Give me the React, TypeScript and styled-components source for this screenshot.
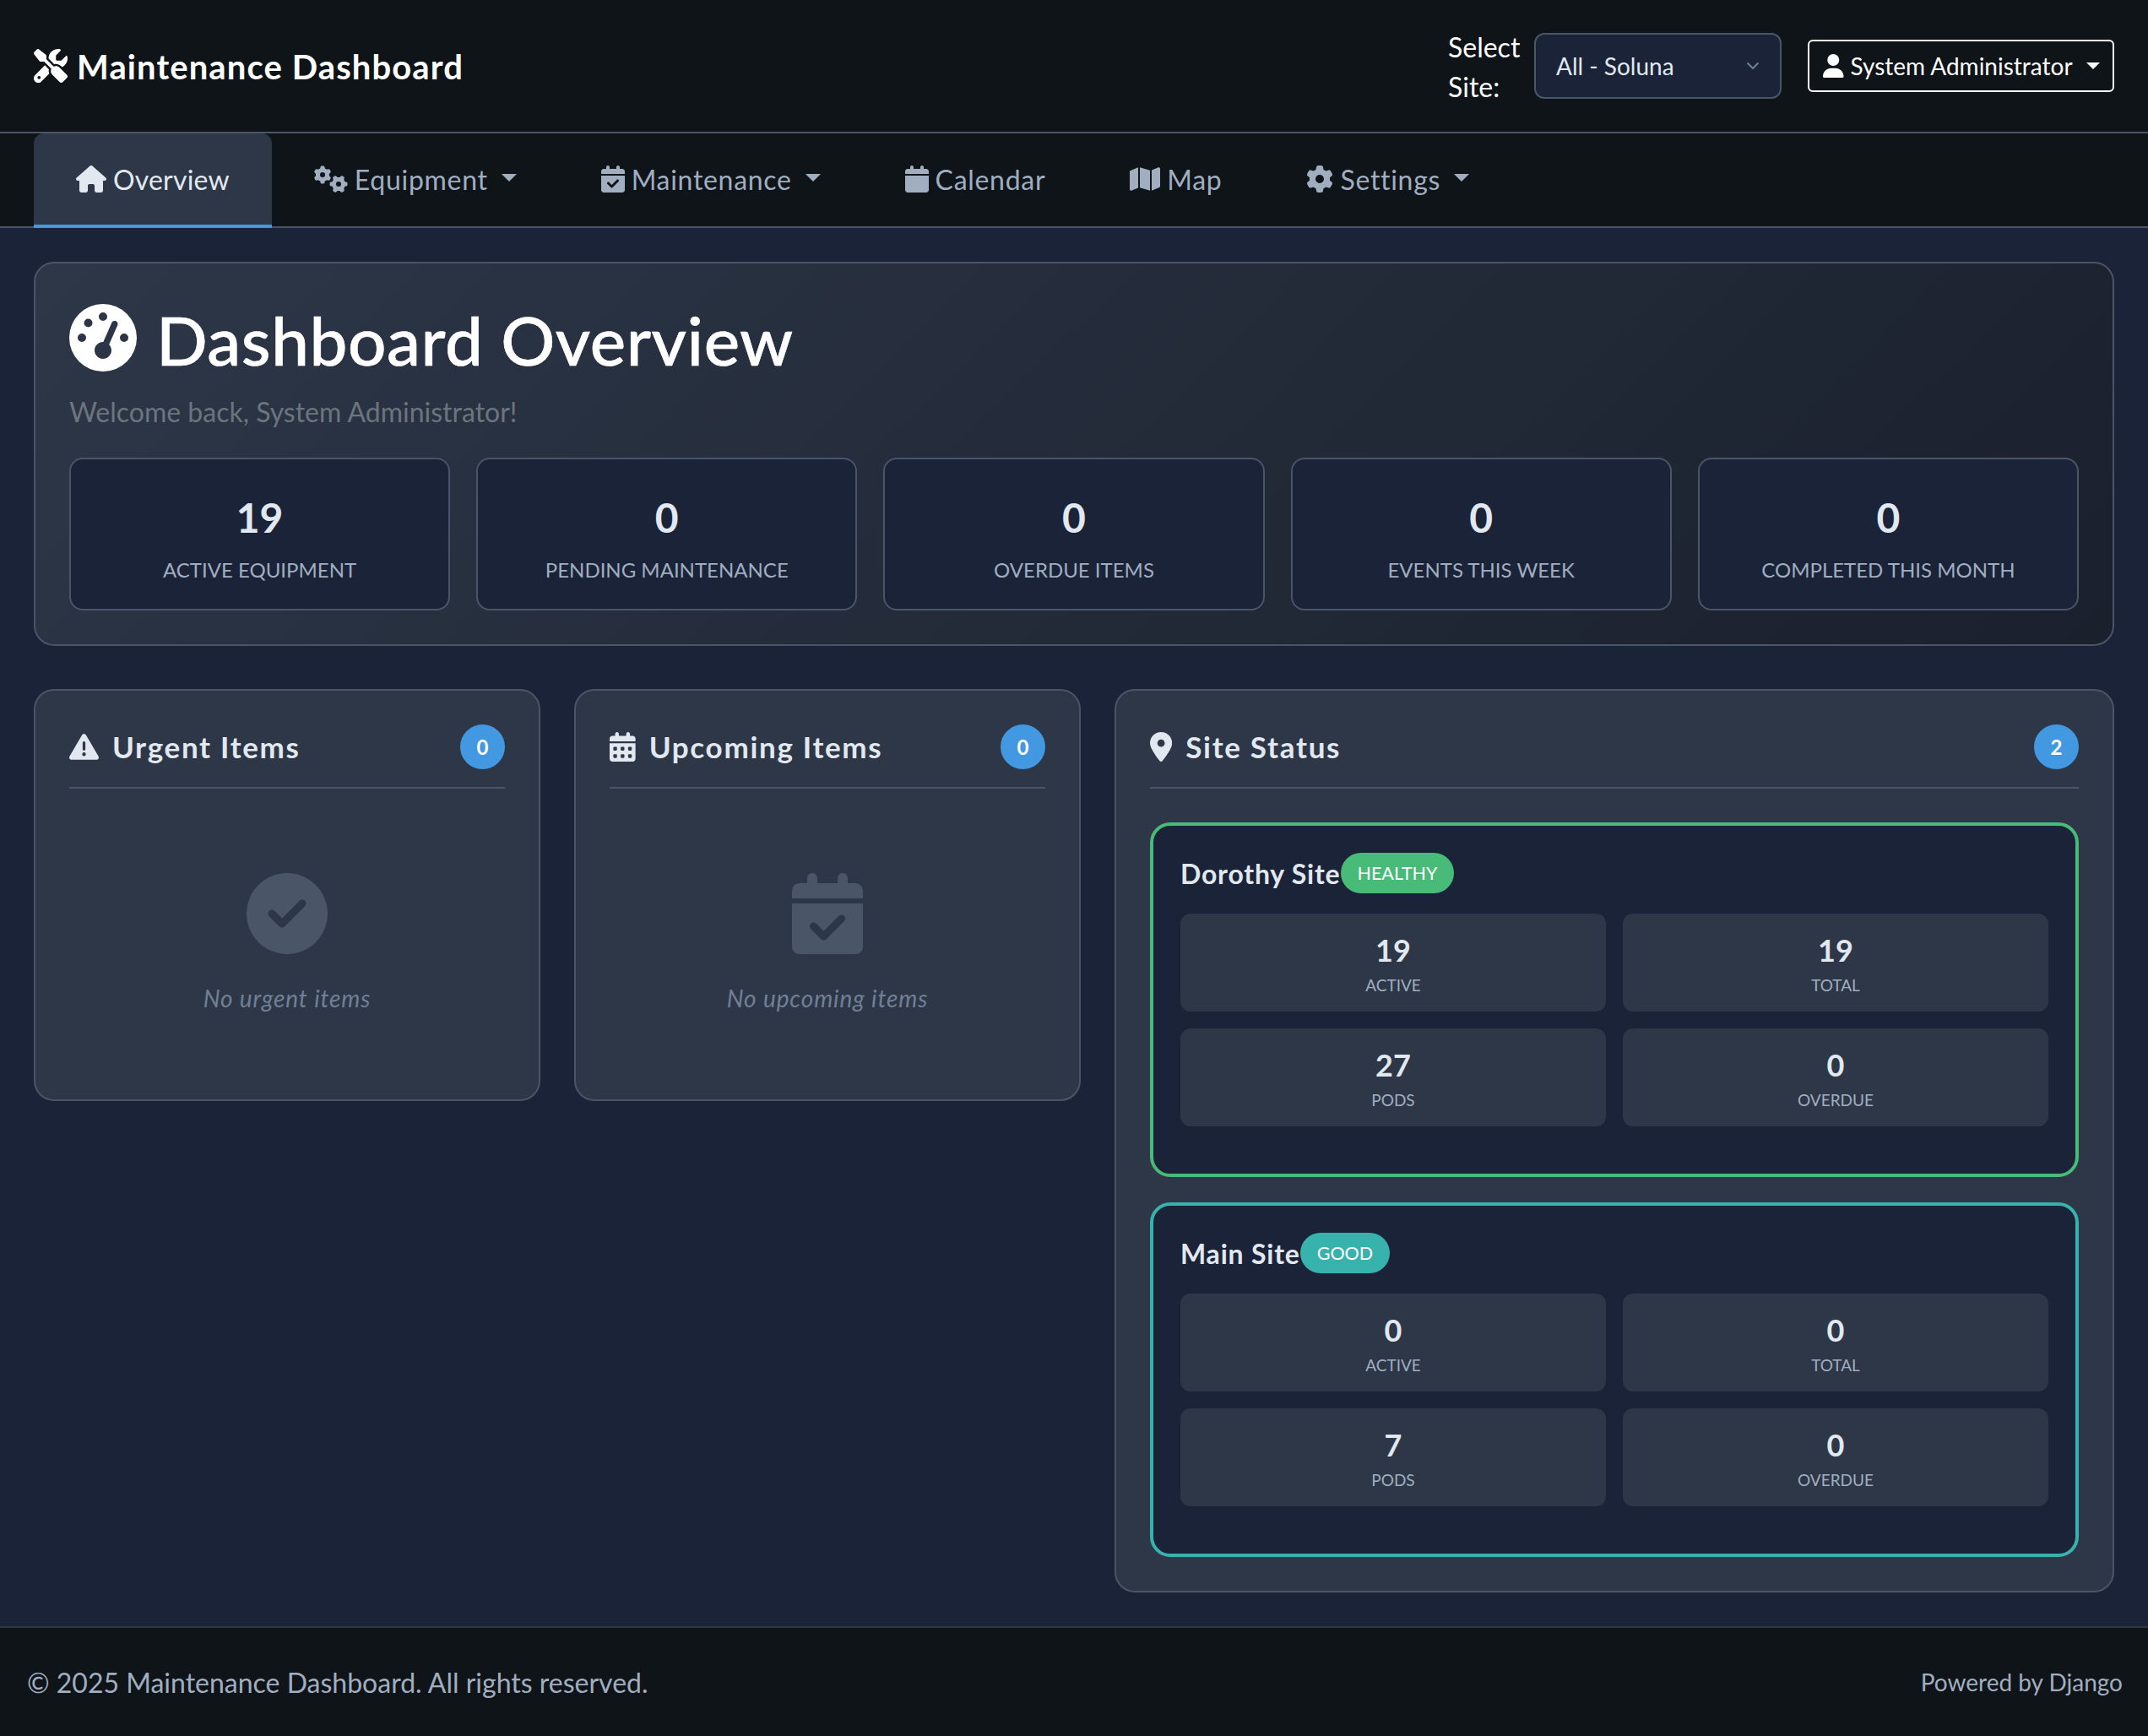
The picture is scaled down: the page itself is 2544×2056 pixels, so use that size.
import React from "react";
import styled, { createGlobalStyle } from "styled-components";
import {
  FaScrewdriverWrench, FaHouse, FaGears, FaCalendarCheck, FaCalendar, FaMap, FaGear, FaUser,
  FaGaugeHigh, FaTriangleExclamation, FaCalendarDays, FaLocationDot, FaCircleCheck,
} from "react-icons/fa6";

const Global = createGlobalStyle`
  html, body { margin: 0; padding: 0; background: #1a2338; }
  body { font-family: "Lato", "Noto Sans", sans-serif; color: #e2e8f0; }
  * { box-sizing: border-box; }
`;

const Page = styled.div`
  min-height: 100vh;
  display: flex;
  flex-direction: column;
`;

/* Font Awesome glyphs sit on a 512-unit em: width follows the glyph's own advance. */
const IconBox = styled.span<{ $em: number; $units: number }>`
  flex: none;
  display: inline-flex;
  height: ${(p) => p.$em}px;
  width: ${(p) => (p.$em * p.$units) / 512}px;
  svg { width: 100%; height: 100%; }
`;

const Header = styled.header`
  height: 158px;
  background: #0f1419;
  border-bottom: 2px solid #4a5568;
  display: flex;
  align-items: center;
  justify-content: space-between;
  padding: 0 40px;
`;

const Brand = styled.div`
  display: flex;
  align-items: center;
  gap: 11px;
  font-size: 40px;
  font-weight: 700;
  letter-spacing: 1.1px;
  color: #fff;
`;

const BrandText = styled.span`
  padding-top: 2px;
`;

const HeaderRight = styled.div`
  display: flex;
  align-items: center;
`;

const SiteLabel = styled.label`
  width: 102px;
  padding-top: 2px;
  font-size: 32px;
  line-height: 47px;
  color: #fff;
`;

const SiteSelect = styled.div`
  width: 293px;
  height: 78px;
  margin-right: 31px;
  padding: 0 24px;
  background: #1a2338;
  border: 2px solid #4a5568;
  border-radius: 12px;
  display: flex;
  align-items: center;
  justify-content: space-between;
  font-size: 28px;
  color: #e2e8f0;
`;

const UserButton = styled.button`
  height: 62px;
  width: 363px;
  background: transparent;
  border: 2px solid #fff;
  border-radius: 6px;
  color: #fff;
  font: 28px "Lato", "Noto Sans", sans-serif;
  white-space: nowrap;
  display: flex;
  align-items: center;
  gap: 8px;
  padding: 0 16px;
  &::after {
    content: "";
    margin-left: 8px;
    border-top: 8px solid #fff;
    border-left: 8px solid transparent;
    border-right: 8px solid transparent;
  }
`;

const Nav = styled.nav`
  height: 112px;
  background: #0f1419;
  border-bottom: 2px solid #4a5568;
  display: flex;
  padding: 0 40px;
`;

const NavItem = styled.a<{ $active?: boolean; $caret?: boolean }>`
  height: 112px;
  padding: 0 50px;
  display: flex;
  align-items: center;
  gap: 8px;
  font-size: 32px;
  letter-spacing: ${(p) => (p.$active ? "0.2px" : "0.7px")};
  color: ${(p) => (p.$active ? "#e2e8f0" : "#a0aec0")};
  background: ${(p) => (p.$active ? "#2d3748" : "transparent")};
  border-radius: ${(p) => (p.$active ? "12px 12px 0 0" : "0")};
  border-bottom: 4px solid ${(p) => (p.$active ? "#4299e1" : "transparent")};
  ${(p) =>
    p.$caret
      ? `&::after {
    content: "";
    margin-left: 8px;
    margin-bottom: 4px;
    border-top: 9px solid currentColor;
    border-left: 9px solid transparent;
    border-right: 9px solid transparent;
  }`
      : ""}
`;

const Main = styled.main`
  flex: 1;
  padding: 40px;
`;

const Hero = styled.section`
  height: 455px;
  margin-bottom: 51px;
  padding: 40px;
  border: 2px solid #4a5568;
  border-radius: 24px;
  background: linear-gradient(135deg, #2d3748 0%, #1a202c 100%);
`;

const HeroTitle = styled.h1`
  margin: 0;
  display: flex;
  align-items: center;
  gap: 23px;
  height: 96px;
  font-size: 80px;
  line-height: 96px;
  font-weight: 500;
  letter-spacing: 0.55px;
  color: #fff;
`;

const HeroText = styled.span`
  padding-top: 3px;
  -webkit-text-stroke: 0.6px #fff;
`;

const HeroSub = styled.p`
  margin: 16px 0 0;
  font-size: 32px;
  line-height: 48px;
  color: #6c757d;
`;

const StatRow = styled.div`
  margin-top: 30px;
  display: grid;
  grid-template-columns: repeat(5, 1fr);
  gap: 31px;
`;

const StatCard = styled.div`
  height: 181px;
  background: #1a2338;
  border: 2px solid #4a5568;
  border-radius: 16px;
  padding-top: 8px;
  display: flex;
  flex-direction: column;
  align-items: center;
  justify-content: center;
`;

const StatValue = styled.div`
  font-size: 48px;
  font-weight: 700;
  line-height: 58px;
  color: #e2e8f0;
`;

const StatLabel = styled.div`
  margin-top: 18px;
  font-size: 24px;
  line-height: 30px;
  text-transform: uppercase;
  color: #a0aec0;
`;

const Columns = styled.div`
  display: grid;
  grid-template-columns: 600px 600px 1184px;
  column-gap: 40px;
  align-items: start;
`;

const Card = styled.section`
  padding: 40px;
  background: #2d3748;
  border: 2px solid #4a5568;
  border-radius: 24px;
`;

const CardHeader = styled.div`
  height: 76px;
  border-bottom: 2px solid #4a5568;
  padding-bottom: 22px;
  display: flex;
  align-items: center;
  justify-content: space-between;
`;

const CardTitle = styled.h2`
  margin: 0;
  display: flex;
  align-items: center;
  gap: 16px;
  font-size: 35px;
  font-weight: 700;
  letter-spacing: 1.7px;
  color: #e2e8f0;
`;

const CountBadge = styled.span`
  width: 53px;
  height: 53px;
  margin-top: 1px;
  border-radius: 50%;
  background: #4299e1;
  color: #fff;
  font-size: 24px;
  font-weight: 700;
  display: flex;
  align-items: center;
  justify-content: center;
`;

const Empty = styled.div`
  height: 328px;
  padding-top: 100px;
  display: flex;
  flex-direction: column;
  align-items: center;
  color: #4a5568;
`;

const EmptyText = styled.p`
  margin: 32px 0 0;
  font-size: 28px;
  line-height: 40px;
  font-style: italic;
  letter-spacing: 0.9px;
  color: #718096;
`;

const SiteList = styled.div`
  margin-top: 40px;
  display: flex;
  flex-direction: column;
  gap: 30px;
`;

const SitePanel = styled.article<{ $color: string }>`
  height: 420px;
  padding: 32px 32px 0;
  background: #1a2338;
  border: 4px solid ${(p) => p.$color};
  border-radius: 24px;
`;

const SiteHead = styled.div`
  height: 48px;
  display: flex;
  align-items: center;
  margin-bottom: 24px;
`;

const SiteName = styled.h3`
  margin: 0;
  font-size: 32px;
  font-weight: 700;
  letter-spacing: 0.8px;
  color: #e2e8f0;
`;

const Pill = styled.span<{ $color: string }>`
  height: 48px;
  padding: 0 20px;
  border-radius: 24px;
  background: ${(p) => p.$color};
  color: #fff;
  font-size: 21.5px;
  display: flex;
  align-items: center;
`;

const MetricGrid = styled.div`
  display: grid;
  grid-template-columns: 1fr 1fr;
  gap: 20px;
`;

const Metric = styled.div`
  height: 116px;
  background: #2d3748;
  border-radius: 12px;
  padding-top: 2px;
  display: flex;
  flex-direction: column;
  align-items: center;
  justify-content: center;
`;

const MetricValue = styled.div`
  font-size: 36px;
  font-weight: 700;
  line-height: 44px;
  color: #e2e8f0;
`;

const MetricLabel = styled.div`
  margin-top: 7px;
  font-size: 19px;
  line-height: 26px;
  text-transform: uppercase;
  color: #a0aec0;
`;

const Footer = styled.footer`
  height: 130px;
  background: #0f1419;
  border-top: 2px solid #2d3748;
  padding: 0 30px 0 32px;
  display: flex;
  align-items: center;
  justify-content: space-between;
  color: #a0aec0;
`;

const FooterLeft = styled.span`
  font-size: 32px;
`;

const FooterRight = styled.span`
  font-size: 28px;
`;

const Chevron = () => (
  <svg width="16" height="16" viewBox="0 0 16 16" fill="none" stroke="#718096" strokeWidth="2" strokeLinecap="round" strokeLinejoin="round">
    <path d="M2 5l6 6 6-6" />
  </svg>
);

const stats: [string, string][] = [
  ["19", "Active Equipment"],
  ["0", "Pending Maintenance"],
  ["0", "Overdue Items"],
  ["0", "Events This Week"],
  ["0", "Completed This Month"],
];

const sites = [
  { name: "Dorothy Site", status: "HEALTHY", color: "#48bb78", m: [["19", "Active"], ["19", "Total"], ["27", "Pods"], ["0", "Overdue"]] },
  { name: "Main Site", status: "GOOD", color: "#38b2ac", m: [["0", "Active"], ["0", "Total"], ["7", "Pods"], ["0", "Overdue"]] },
];

export default function App() {
  return (
    <Page>
      <Global />
      <Header>
        <Brand>
          <IconBox $em={40} $units={512}><FaScrewdriverWrench /></IconBox>
          <BrandText>Maintenance Dashboard</BrandText>
        </Brand>
        <HeaderRight>
          <SiteLabel>Select Site:</SiteLabel>
          <SiteSelect>All - Soluna<Chevron /></SiteSelect>
          <UserButton><IconBox $em={28} $units={448}><FaUser /></IconBox>System Administrator</UserButton>
        </HeaderRight>
      </Header>
      <Nav>
        <NavItem $active><IconBox $em={32} $units={576}><FaHouse /></IconBox>Overview</NavItem>
        <NavItem $caret><IconBox $em={32} $units={640}><FaGears /></IconBox>Equipment</NavItem>
        <NavItem $caret><IconBox $em={32} $units={448}><FaCalendarCheck /></IconBox>Maintenance</NavItem>
        <NavItem><IconBox $em={32} $units={448}><FaCalendar /></IconBox>Calendar</NavItem>
        <NavItem><IconBox $em={32} $units={576}><FaMap /></IconBox>Map</NavItem>
        <NavItem $caret><IconBox $em={32} $units={512}><FaGear /></IconBox>Settings</NavItem>
      </Nav>
      <Main>
        <Hero>
          <HeroTitle>
            <IconBox $em={80} $units={512}><FaGaugeHigh /></IconBox>
            <HeroText>Dashboard Overview</HeroText>
          </HeroTitle>
          <HeroSub>Welcome back, System Administrator!</HeroSub>
          <StatRow>
            {stats.map(([v, l]) => (
              <StatCard key={l}><StatValue>{v}</StatValue><StatLabel>{l}</StatLabel></StatCard>
            ))}
          </StatRow>
        </Hero>
        <Columns>
          <Card>
            <CardHeader>
              <CardTitle><IconBox $em={35} $units={512}><FaTriangleExclamation /></IconBox>Urgent Items</CardTitle>
              <CountBadge>0</CountBadge>
            </CardHeader>
            <Empty><IconBox $em={96} $units={512}><FaCircleCheck /></IconBox><EmptyText>No urgent items</EmptyText></Empty>
          </Card>
          <Card>
            <CardHeader>
              <CardTitle><IconBox $em={35} $units={448}><FaCalendarDays /></IconBox>Upcoming Items</CardTitle>
              <CountBadge>0</CountBadge>
            </CardHeader>
            <Empty><IconBox $em={96} $units={448}><FaCalendarCheck /></IconBox><EmptyText>No upcoming items</EmptyText></Empty>
          </Card>
          <Card>
            <CardHeader>
              <CardTitle><IconBox $em={35} $units={384}><FaLocationDot /></IconBox>Site Status</CardTitle>
              <CountBadge>2</CountBadge>
            </CardHeader>
            <SiteList>
              {sites.map((s) => (
                <SitePanel key={s.name} $color={s.color}>
                  <SiteHead><SiteName>{s.name}</SiteName><Pill $color={s.color}>{s.status}</Pill></SiteHead>
                  <MetricGrid>
                    {s.m.map(([v, l]) => (
                      <Metric key={l}><MetricValue>{v}</MetricValue><MetricLabel>{l}</MetricLabel></Metric>
                    ))}
                  </MetricGrid>
                </SitePanel>
              ))}
            </SiteList>
          </Card>
        </Columns>
      </Main>
      <Footer>
        <FooterLeft>© 2025 Maintenance Dashboard. All rights reserved.</FooterLeft>
        <FooterRight>Powered by Django</FooterRight>
      </Footer>
    </Page>
  );
}
